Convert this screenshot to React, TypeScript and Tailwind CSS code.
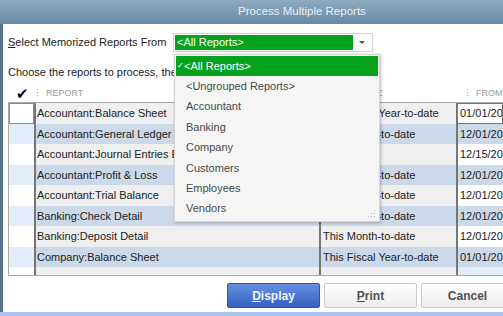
import React from 'react';

const rows: [string, string, string][] = [
  ['Accountant:Balance Sheet', 'This Fiscal Year-to-date', '01/01/2018'],
  ['Accountant:General Ledger', 'This Month-to-date', '12/01/2018'],
  ['Accountant:Journal Entries Entered Today', 'Today', '12/15/2018'],
  ['Accountant:Profit & Loss', 'This Month-to-date', '12/01/2018'],
  ['Accountant:Trial Balance', 'This Month-to-date', '12/01/2018'],
  ['Banking:Check Detail', 'This Month-to-date', '12/01/2018'],
  ['Banking:Deposit Detail', 'This Month-to-date', '12/01/2018'],
  ['Company:Balance Sheet', 'This Fiscal Year-to-date', '01/01/2018'],
];

const groups = ['<Ungrouped Reports>', 'Accountant', 'Banking', 'Company', 'Customers', 'Employees', 'Vendors'];

const Grip = () => (
  <svg width="8" height="8" viewBox="0 0 8 8" className="absolute right-[3px] bottom-[3px]">
    <rect x="6" y="0" width="1" height="1" fill="#b8b8b8" />
    <rect x="3" y="3" width="1" height="1" fill="#b8b8b8" />
    <rect x="6" y="3" width="1" height="1" fill="#b8b8b8" />
    <rect x="0" y="6" width="1" height="1" fill="#b8b8b8" />
    <rect x="3" y="6" width="1" height="1" fill="#b8b8b8" />
    <rect x="6" y="6" width="1" height="1" fill="#b8b8b8" />
  </svg>
);

export default function App() {
  return (
    <div className="relative w-[503px] h-[316px] overflow-hidden bg-white font-['Liberation_Sans',Arial,sans-serif] text-[11px] text-[#222]">
      {/* title bar */}
      <div className="h-[24px] bg-gradient-to-b from-[#8fabc2] to-[#6a8aa3] flex items-center pl-[238px] text-[11.5px] text-[#e9eff4]">
        Process Multiple Reports
      </div>

      <div className="flex h-[288px]">
        <div className="w-[3px] bg-[#57738c]" />
        <div className="flex-1 flex flex-col pl-[5px] min-w-0">
          {/* selector row */}
          <div className="flex items-center h-[20px] mt-[8px]">
            <span className="w-[165px]">
              <span className="underline">S</span>elect Memorized Reports From
            </span>
            <div className="flex items-center w-[200px] h-[19px] border border-[#d4d4d4] bg-white p-[1px]">
              <div className="flex-1 h-full bg-[#07a21d] text-white flex items-center pl-[2px]">&lt;All Reports&gt;</div>
              <div className="w-[18px] flex justify-center">
                <div className="w-0 h-0 border-l-[3px] border-r-[3px] border-t-[3px] border-l-transparent border-r-transparent border-t-[#555]" />
              </div>
            </div>
          </div>

          <div className="mt-[13px] h-[14px] flex items-center whitespace-nowrap">
            Choose the reports to process, then click Display or Print.
          </div>

          {/* header */}
          <div className="h-[17px] mt-[6px] flex items-center text-[9px] text-[#9a9a9a] whitespace-nowrap">
            <span className="w-[25px] pl-[8px] text-[15px] text-black leading-none">✔</span>
            <span>⋮</span>
            <span className="pl-[4px] w-[270px]">REPORT</span>
            <span>⋮</span>
            <span className="pl-[4px] w-[142px]">DATE RANGE</span>
            <span>⋮</span>
            <span className="pl-[4px]">FROM</span>
          </div>

          {/* table */}
          <div className="h-[174px] border border-[#a9a9a9] border-r-0 flex flex-col overflow-hidden">
            {rows.map(([name, range, from], i) => {
              const even = i % 2 === 1;
              const focus = i === 0;
              return (
                <div key={name} className="flex h-[20.5px] shrink-0 whitespace-nowrap">
                  <div
                    className={`w-[25px] ${even ? 'bg-[#e3edf9]' : 'bg-white'} ${focus ? 'border border-[#8a8a8a]' : ''}`}
                  />
                  <div
                    className={`w-[285px] border-l-2 border-[#767676] pl-[1px] flex items-center overflow-hidden ${even ? 'bg-[#ccd9e8]' : 'bg-[#efefef]'}`}
                  >
                    {name}
                  </div>
                  <div
                    className={`w-[137px] border-l-2 border-[#767676] pl-[2px] flex items-center overflow-hidden ${even ? 'bg-[#ccd9e8]' : 'bg-[#efefef]'}`}
                  >
                    {range}
                  </div>
                  <div
                    className={`flex-1 border-l-2 border-[#767676] pl-[2px] flex items-center overflow-hidden ${even ? 'bg-[#ccd9e8]' : 'bg-white'} ${focus ? 'border border-[#6a6a6a] border-l-2' : ''}`}
                  >
                    {from}
                  </div>
                </div>
              );
            })}
            <div className="flex flex-1">
              <div className="w-[25px] bg-white" />
              <div className="w-[285px] border-l-2 border-[#767676] bg-[#efefef]" />
              <div className="w-[137px] border-l-2 border-[#767676] bg-[#efefef]" />
              <div className="flex-1 border-l-2 border-[#767676] bg-[#e3edf9]" />
            </div>
          </div>

          {/* buttons */}
          <div className="flex gap-[4px] mt-[7px] pl-[219px] text-[12px] font-bold">
            <button className="w-[93px] h-[25px] shrink-0 rounded-[2px] border border-[#2f56a8] bg-gradient-to-b from-[#6690e0] to-[#3760c2] text-[#eef3fb]">
              <span className="underline">D</span>isplay
            </button>
            <button className="w-[93px] h-[25px] shrink-0 rounded-[2px] border border-[#cacaca] bg-gradient-to-b from-white to-[#ececec] text-[#505050]">
              <span className="underline">P</span>rint
            </button>
            <button className="w-[93px] h-[25px] shrink-0 rounded-[2px] border border-[#cacaca] bg-gradient-to-b from-white to-[#ececec] text-[#505050]">
              Cancel
            </button>
          </div>
        </div>
      </div>
      <div className="h-[4px] bg-[#a9c6ec]" />

      {/* open dropdown list */}
      <div className="absolute left-[174px] top-[54px] w-[206px] h-[168px] bg-[#f5f5f5] border border-[#d6d6d6] shadow-[1px_1px_3px_rgba(0,0,0,0.25)] p-[1px] text-[11px] text-[#4a4a4a]">
        <div className="h-[20px] bg-[#07a21d] text-white flex items-center">
          <span className="w-[8px] pl-[1px] text-[8px]">✓</span>
          <span>&lt;All Reports&gt;</span>
        </div>
        {groups.map((g) => (
          <div key={g} className="h-[20.4px] flex items-center pl-[10px]">
            {g}
          </div>
        ))}
        <Grip />
      </div>
    </div>
  );
}
